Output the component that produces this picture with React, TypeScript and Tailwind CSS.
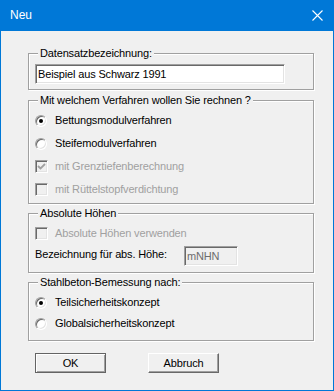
import type { ReactNode } from 'react'

type GroupProps = {
  title: string
  className?: string
  children: ReactNode
}

function Group({ title, className = '', children }: GroupProps) {
  return (
    <fieldset
      className={`border border-[#a0a0a0] px-[6px] shadow-[inset_1px_1px_0_#ffffff,1px_1px_0_#ffffff] ${className}`}
    >
      <legend className="ml-[3px] bg-[#f0f0f0] px-[2px] leading-[13px]">{title}</legend>
      {children}
    </fieldset>
  )
}

function Radio({ checked, label, className = '' }: { checked?: boolean; label: string; className?: string }) {
  return (
    <div className={`flex items-center ${className}`}>
      <span className="flex h-[12px] w-[12px] items-center justify-center rounded-full border border-b-white border-l-[#a0a0a0] border-r-white border-t-[#a0a0a0] bg-white shadow-[inset_1px_1px_0_#696969,inset_-1px_-1px_0_#e3e3e3]">
        {checked ? <span className="h-[4px] w-[4px] rounded-full bg-black" /> : null}
      </span>
      <span className="ml-[8px]">{label}</span>
    </div>
  )
}

function Checkbox({ checked, label, className = '' }: { checked?: boolean; label: string; className?: string }) {
  return (
    <div className={`flex items-center ${className}`}>
      <span className="flex h-[13px] w-[13px] items-center justify-center border border-b-white border-l-[#a0a0a0] border-r-white border-t-[#a0a0a0] bg-[#f0f0f0] shadow-[inset_1px_1px_0_#696969,inset_-1px_-1px_0_#e3e3e3]">
        {checked ? (
          <svg width="9" height="9" viewBox="0 0 9 9">
            <path d="M1 4 L3.5 6.5 L8 2" fill="none" stroke="#a0a0a0" strokeWidth="1.8" />
          </svg>
        ) : null}
      </span>
      <span className="ml-[7px] text-[#a0a0a0]">{label}</span>
    </div>
  )
}

export default function App() {
  return (
    <div className="flex h-[391px] w-[334px] flex-col border-x border-b border-[#0078d7] bg-[#f0f0f0] font-['Liberation_Sans',Arial,sans-serif] text-[11px] leading-[13px] tracking-[-0.15px] text-black">
      <div className="flex h-[31px] shrink-0 items-center justify-between bg-[#0078d7] pl-[9px] pr-[10px]">
        <span className="text-[12px] tracking-normal text-white">Neu</span>
        <svg width="11" height="11" viewBox="0 0 11 11">
          <path d="M0.5 0.5 L10.5 10.5 M10.5 0.5 L0.5 10.5" stroke="#ffffff" strokeWidth="1.1" />
        </svg>
      </div>

      <div className="ml-[27px] w-[286px] pt-[16px]">
        <Group title="Datensatzbezeichnung:" className="pb-[5px] pt-[4px]">
          <div className="flex h-[20px] w-[250px] items-center border border-b-white border-l-[#a0a0a0] border-r-white border-t-[#a0a0a0] bg-white pl-[2px] shadow-[inset_1px_1px_0_#696969,inset_-1px_-1px_0_#e3e3e3]">
            Beispiel aus Schwarz 1991
          </div>
        </Group>

        <Group title="Mit welchem Verfahren wollen Sie rechnen ?" className="mt-[4px] pb-[2px] pt-[2px]">
          <Radio checked label="Bettungsmodulverfahren" className="h-[23px]" />
          <Radio label="Steifemodulverfahren" className="h-[23px]" />
          <Checkbox checked label="mit Grenztiefenberechnung" className="h-[23px]" />
          <Checkbox label="mit Rüttelstopfverdichtung" className="h-[23px]" />
        </Group>

        <Group title="Absolute Höhen" className="mt-[3px] pb-[6px] pt-[2px]">
          <Checkbox label="Absolute Höhen verwenden" className="h-[22px]" />
          <div className="mt-[2px] flex items-center">
            <span className="mb-[3px] w-[149px]">Bezeichnung für abs. Höhe:</span>
            <div className="flex h-[20px] w-[54px] items-center border border-b-white border-l-[#a0a0a0] border-r-white border-t-[#a0a0a0] bg-[#f0f0f0] pl-[2px] text-[#6d6d6d] shadow-[inset_1px_1px_0_#696969,inset_-1px_-1px_0_#e3e3e3]">
              mNHN
            </div>
          </div>
        </Group>

        <Group title="Stahlbeton-Bemessung nach:" className="mt-[3px] pb-[6px] pt-[3px]">
          <Radio checked label="Teilsicherheitskonzept" className="h-[21px]" />
          <Radio label="Globalsicherheitskonzept" className="h-[21px]" />
        </Group>

        <div className="ml-[7px] mt-[12px] flex gap-[42px]">
          <button className="flex h-[20px] w-[71px] items-center justify-center border border-[#646464] bg-[#f0f0f0] shadow-[inset_1px_1px_0_#ffffff,inset_-1px_-1px_0_#a0a0a0]">
            OK
          </button>
          <button className="flex h-[20px] w-[71px] items-center justify-center border border-b-[#696969] border-l-white border-r-[#696969] border-t-white bg-[#f0f0f0] shadow-[inset_-1px_-1px_0_#a0a0a0]">
            Abbruch
          </button>
        </div>
      </div>
    </div>
  )
}
